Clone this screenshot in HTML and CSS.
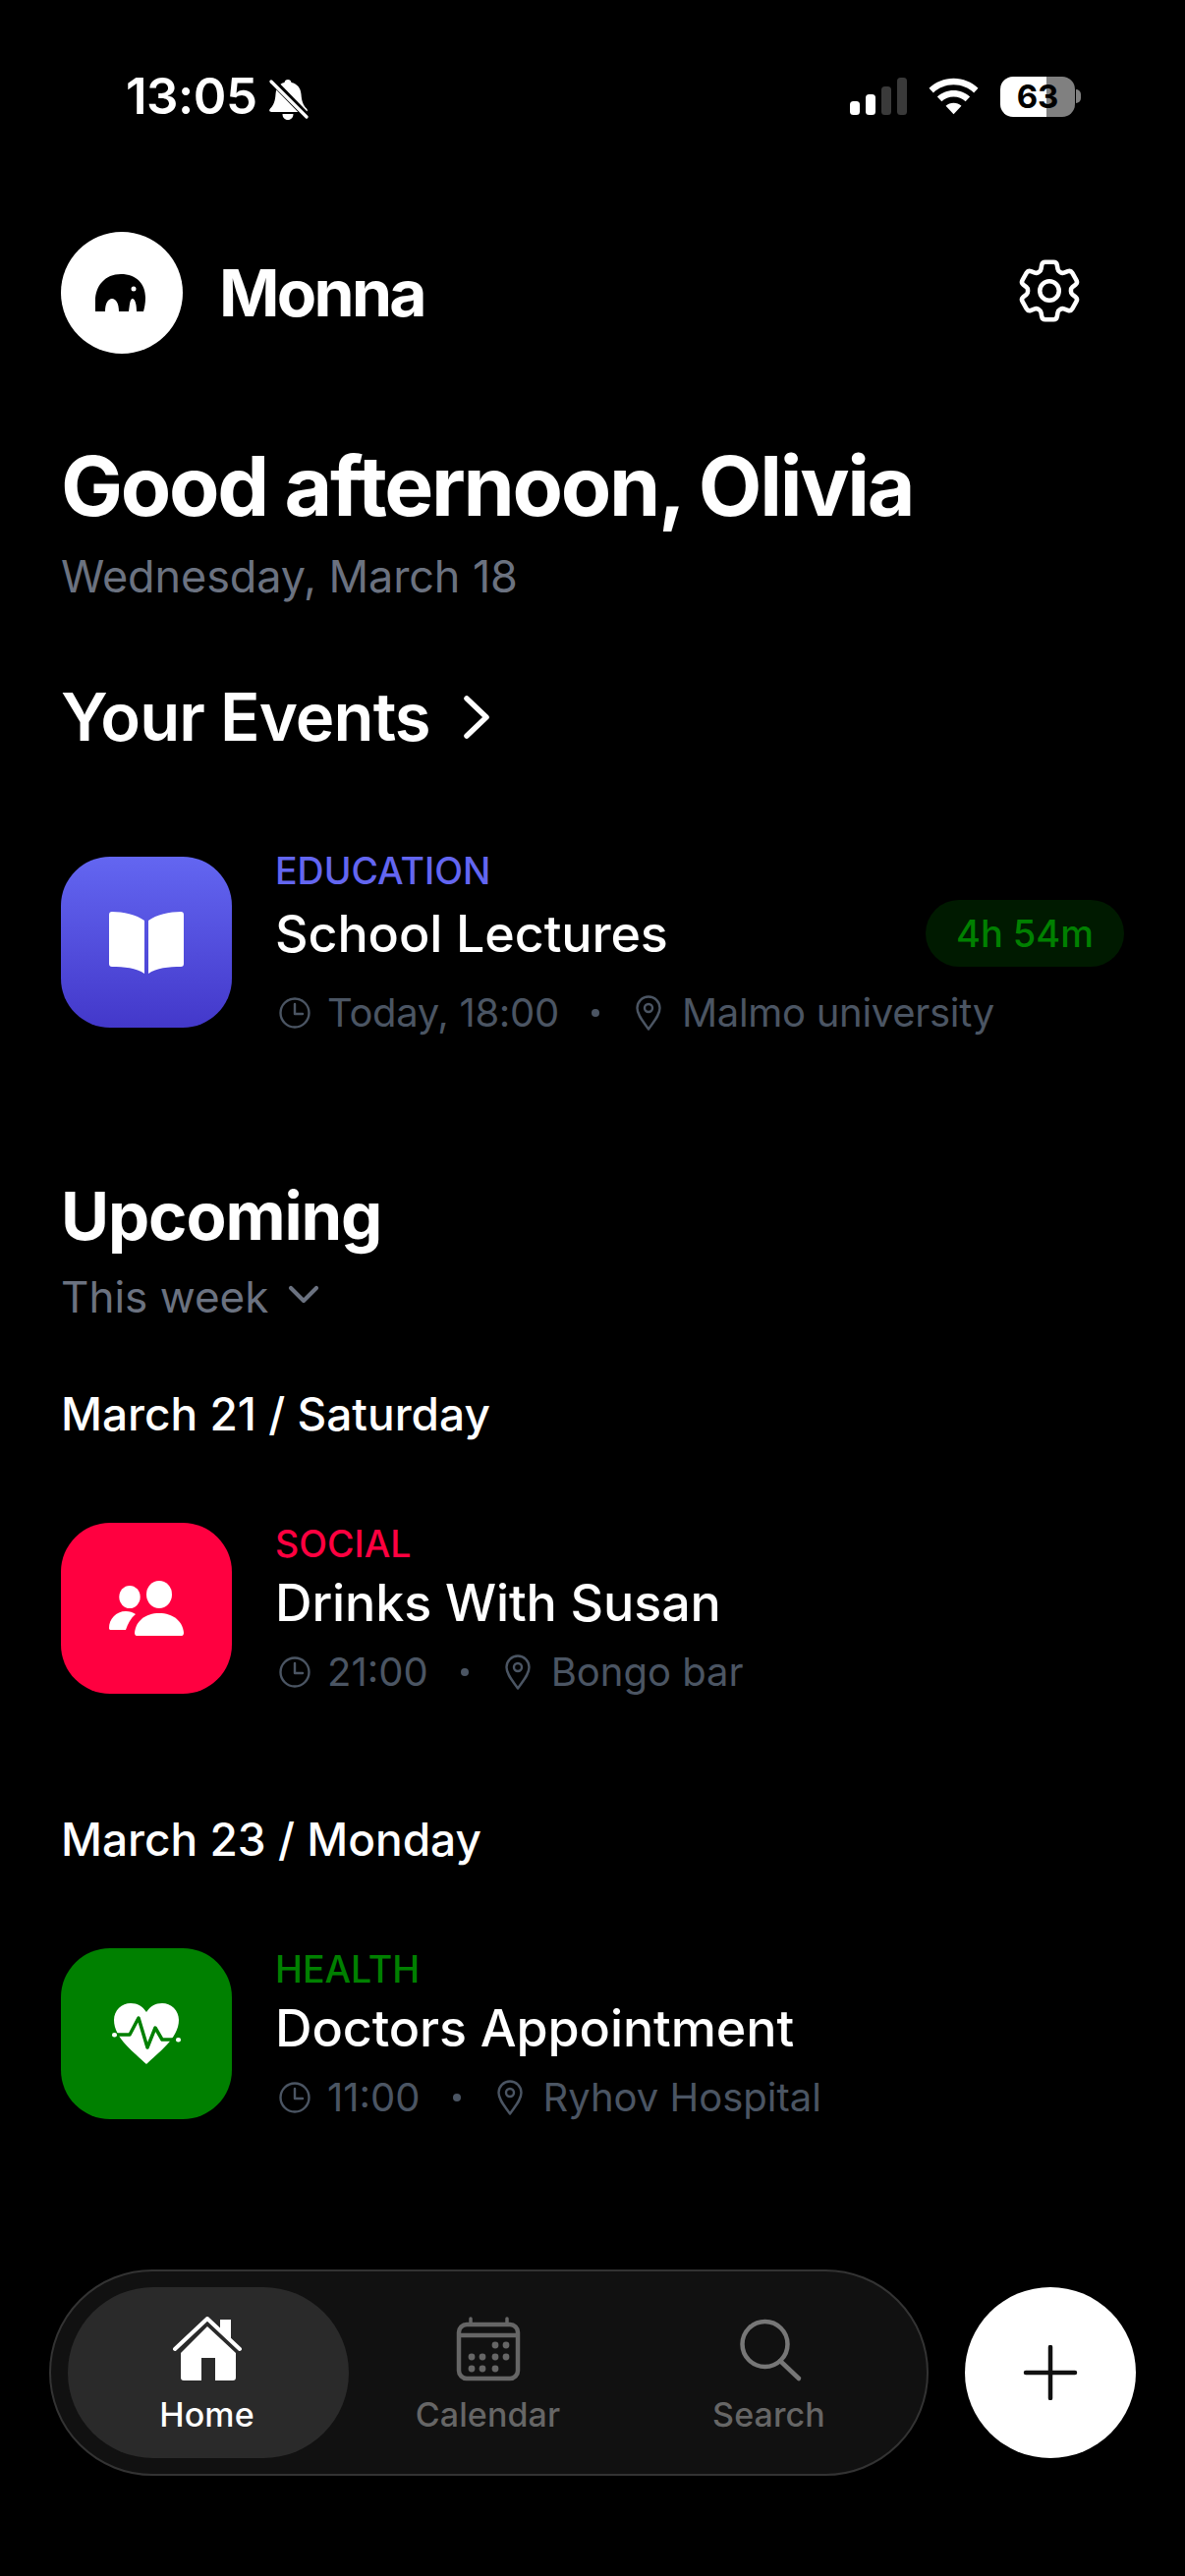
FILE: index.html
```html
<!DOCTYPE html>
<html lang="en">
<head>
<meta charset="utf-8">
<title>Monna</title>
<link rel="stylesheet" href="styles.css">
</head>
<body>
<div class="screen">
  <div class="status">
    <div class="status-left">
      <span class="time">13:05</span>
      <svg class="bell" viewBox="0 0 40 41"><path d="M19 0c2 0 3.200 1.200 3.500 3 6 1.300 9.500 5.500 10 12 .5 7 2 11 5.500 14.500 1.500 1.500 1 3.500-1.500 3.500H2.500C0 33-.5 31 1 29.500 4.500 26 6 22 6.500 15 7 8.500 10 4.300 15.500 3 15.800 1.200 17 0 19 0zM13.500 35h11c0 3.500-2.200 6-5.500 6s-5.500-2.500-5.500-6z" fill="#fff"/><path d="M0 -2l41 42" stroke="#000" stroke-width="7"/><path d="M2 2l36 36" stroke="#fff" stroke-width="3.200" stroke-linecap="round"/></svg>
    </div>
    <div class="status-right">
      <svg class="signal" viewBox="0 0 58 38"><rect x="0" y="24" width="10" height="14" rx="3.500" fill="#fff"/><rect x="16" y="17" width="10" height="21" rx="3.500" fill="#fff"/><rect x="32" y="9" width="10" height="29" rx="3.500" fill="#3a3a3a"/><rect x="48" y="0" width="10" height="38" rx="3.500" fill="#3a3a3a"/></svg>
      <svg class="wifi" viewBox="0 0 50 36"><path d="M25 0c9.500 0 18 3.700 24.500 9.800l-4.300 4.700C39.900 9.500 32.800 6.500 25 6.500S10.100 9.500 4.800 14.500L.5 9.800C7 3.700 15.500 0 25 0z" fill="#fff"/><path d="M25 12c6.300 0 12 2.400 16.300 6.400l-4.400 4.700C33.800 20.200 29.600 18.500 25 18.500s-8.800 1.700-11.900 4.600l-4.400-4.700C13 14.400 18.700 12 25 12z" fill="#fff"/><path d="M25 24.500c3 0 5.700 1.100 7.800 3L25 36l-7.800-8.500c2.100-1.900 4.800-3 7.800-3z" fill="#fff"/></svg>
      <div class="battery"><div class="battery-body"><span class="battery-num">63</span></div><span class="battery-tip"></span></div>
    </div>
  </div>

  <header class="brand">
    <div class="brand-left">
      <div class="logo">
        <svg class="logo-mark" viewBox="0 0 51 38"><path d="M0 38V27C0 12 10 0 26 0c16 0 25 10 25 24 0 6-1 10-2 14h-7c0-6-1-12-4-13-3 0-3 7-4 13H24c0-8-3-13-7-13s-7 5-7 13z" fill="#000"/><circle cx="39" cy="15" r="2.500" fill="#fff"/></svg>
      </div>
      <span class="brand-name">Monna</span>
    </div>
    <svg class="gear" viewBox="0 0 24 24" fill="none" stroke="#fff" stroke-width="1.400" stroke-linecap="round" stroke-linejoin="round"><path d="M9.594 3.940c.09-.542.56-.94 1.110-.94h2.593c.55 0 1.020.398 1.110.94l.213 1.281c.063.374.313.686.645.870.074.040.147.083.22.127.325.196.72.257 1.075.124l1.217-.456a1.125 1.125 0 0 1 1.370.490l1.296 2.247a1.125 1.125 0 0 1-.26 1.431l-1.003.827c-.293.241-.438.613-.43.992a7.723 7.723 0 0 1 0 .255c-.008.378.137.75.43.991l1.004.827c.424.35.534.955.26 1.430l-1.298 2.247a1.125 1.125 0 0 1-1.369.491l-1.217-.456c-.355-.133-.75-.072-1.076.124a6.470 6.470 0 0 1-.22.128c-.331.183-.581.495-.644.869l-.213 1.281c-.09.543-.56.94-1.110.94h-2.594c-.55 0-1.019-.398-1.110-.94l-.213-1.281c-.062-.374-.312-.686-.644-.87a6.520 6.520 0 0 1-.22-.127c-.325-.196-.72-.257-1.076-.124l-1.217.456a1.125 1.125 0 0 1-1.369-.49l-1.297-2.247a1.125 1.125 0 0 1 .26-1.431l1.004-.827c.292-.24.437-.613.43-.991a6.932 6.932 0 0 1 0-.255c.007-.38-.138-.751-.43-.992l-1.004-.827a1.125 1.125 0 0 1-.26-1.430l1.297-2.247a1.125 1.125 0 0 1 1.370-.491l1.216.456c.356.133.751.072 1.076-.124.072-.044.146-.086.22-.128.332-.183.582-.495.644-.869l.214-1.280z"/><path d="M15 12a3 3 0 1 1-6 0 3 3 0 0 1 6 0z"/></svg>
  </header>

  <section class="greeting">
    <h1 class="hello">Good afternoon, Olivia</h1>
    <p class="date">Wednesday, March 18</p>
  </section>

  <h2 class="section-title events-title">Your Events
    <svg class="chev-right" viewBox="0 0 30 46" fill="none" stroke="#fff" stroke-width="5.500" stroke-linecap="round" stroke-linejoin="round"><path d="M5 4l20 19L5 42"/></svg>
  </h2>

  <article class="event first-event">
    <div class="tile tile-edu">
      <svg class="icon-book" viewBox="0 0 76 63"><path d="M36 9C28 3 14 0 3 0 1 0 0 1 0 3v50c0 2 1 3 3 3 12 0 25 1 33 7z" fill="#fff"/><path d="M40 9c8-6 22-9 33-9 2 0 3 1 3 3v50c0 2-1 3-3 3-12 0-25 1-33 7z" fill="#fff"/></svg>
    </div>
    <div class="event-text">
      <div class="cat cat-edu">EDUCATION</div>
      <div class="event-title">School Lectures</div>
      <div class="meta">
        <svg class="clock" viewBox="0 0 32 32" fill="none" stroke="#4b5563" stroke-width="2.400" stroke-linecap="round" stroke-linejoin="round"><circle cx="16" cy="16" r="14.500"/><path d="M16 7v10h8"/></svg>
        <span class="meta-text">Today, 18:00</span>
        <span class="dot"></span>
        <svg class="pin" viewBox="0 0 26 36" fill="none" stroke="#4b5563" stroke-width="2.400" stroke-linejoin="round"><path d="M13 34.500C7 26 1.500 20 1.500 13a11.500 11.500 0 0 1 23 0c0 7-5.500 13-11.500 21.500z"/><circle cx="13" cy="13" r="4"/></svg>
        <span class="meta-text">Malmo university</span>
      </div>
    </div>
    <div class="badge">4h 54m</div>
  </article>

  <h2 class="upcoming">Upcoming</h2>
  <div class="filter">This week
    <svg class="chev-down" viewBox="0 0 32 20" fill="none" stroke="#6b7280" stroke-width="4.200" stroke-linecap="round" stroke-linejoin="round"><path d="M3 3l13 13L29 3"/></svg>
  </div>

  <h3 class="day day-first">March 21 / Saturday</h3>
  <article class="event">
    <div class="tile tile-social">
      <svg class="icon-people" viewBox="0 0 76 56"><ellipse cx="21" cy="16.500" rx="10.700" ry="11.500" fill="#fff"/><ellipse cx="51" cy="14" rx="13" ry="14" fill="#fff"/><path d="M0 48c0-9 7-17 17-17 4 0 7 1 10 3-5 4-8 10-10 16H2c-1.500 0-2-.5-2-2z" fill="#fff"/><path d="M26 53c1-12 11-20 25-20s24 8 25 20c0 2-1 3-2 3H28c-1 0-2-1-2-3z" fill="#fff"/></svg>
    </div>
    <div class="event-text">
      <div class="cat cat-social">SOCIAL</div>
      <div class="event-title">Drinks With Susan</div>
      <div class="meta">
        <svg class="clock" viewBox="0 0 32 32" fill="none" stroke="#4b5563" stroke-width="2.400" stroke-linecap="round" stroke-linejoin="round"><circle cx="16" cy="16" r="14.500"/><path d="M16 7v10h8"/></svg>
        <span class="meta-text">21:00</span>
        <span class="dot"></span>
        <svg class="pin" viewBox="0 0 26 36" fill="none" stroke="#4b5563" stroke-width="2.400" stroke-linejoin="round"><path d="M13 34.500C7 26 1.500 20 1.500 13a11.500 11.500 0 0 1 23 0c0 7-5.500 13-11.500 21.500z"/><circle cx="13" cy="13" r="4"/></svg>
        <span class="meta-text">Bongo bar</span>
      </div>
    </div>
  </article>

  <h3 class="day day-second">March 23 / Monday</h3>
  <article class="event">
    <div class="tile tile-health">
      <svg class="icon-heart" viewBox="0 0 70 62"><path d="M35 62C24 51 2 36 2 17 2 7 10 0 19 0c7 0 12 3 16 9 4-6 9-9 16-9 9 0 17 7 17 17 0 19-22 34-33 45z" fill="#fff"/><path d="M2 32h16l9-17 9 30 8-20 7 12h17" fill="none" stroke="#008000" stroke-width="3.500" stroke-linejoin="round"/><rect x="0" y="30" width="5" height="4.500" rx="2.200" fill="#fff"/><rect x="65" y="35" width="5" height="4.500" rx="2.200" fill="#fff"/></svg>
    </div>
    <div class="event-text">
      <div class="cat cat-health">HEALTH</div>
      <div class="event-title">Doctors Appointment</div>
      <div class="meta">
        <svg class="clock" viewBox="0 0 32 32" fill="none" stroke="#4b5563" stroke-width="2.400" stroke-linecap="round" stroke-linejoin="round"><circle cx="16" cy="16" r="14.500"/><path d="M16 7v10h8"/></svg>
        <span class="meta-text">11:00</span>
        <span class="dot"></span>
        <svg class="pin" viewBox="0 0 26 36" fill="none" stroke="#4b5563" stroke-width="2.400" stroke-linejoin="round"><path d="M13 34.500C7 26 1.500 20 1.500 13a11.500 11.500 0 0 1 23 0c0 7-5.500 13-11.500 21.500z"/><circle cx="13" cy="13" r="4"/></svg>
        <span class="meta-text">Ryhov Hospital</span>
      </div>
    </div>
  </article>

  <div class="bottom">
    <nav class="tabbar">
      <div class="tab tab-active">
        <svg class="tab-icon" viewBox="0 0 70 68"><path d="M2 33L35 2l33 31" fill="none" stroke="#fff" stroke-width="4" stroke-linecap="round" stroke-linejoin="round"/><path d="M48 3h11v22L48 14z" fill="#fff"/><path d="M35 10L64 37v25c0 2-1 3-3 3H43V42H29v23H11c-2 0-3-1-3-3V37z" fill="#fff"/></svg>
        <span class="tab-label">Home</span>
      </div>
      <div class="tab">
        <svg class="tab-icon" viewBox="0 0 70 68" fill="none"><rect x="5" y="8" width="60" height="55" rx="8" stroke="#666" stroke-width="4.500"/><path d="M5 19h60" stroke="#666" stroke-width="4.500"/><path d="M17 2v6M54 2v6" stroke="#666" stroke-width="3.500" stroke-linecap="round"/><g fill="#666"><circle cx="42" cy="29" r="3.400"/><circle cx="53" cy="29" r="3.400"/><circle cx="18" cy="41" r="3.400"/><circle cx="29" cy="41" r="3.400"/><circle cx="42" cy="41" r="3.400"/><circle cx="53" cy="41" r="3.400"/><circle cx="18" cy="53" r="3.400"/><circle cx="29" cy="53" r="3.400"/><circle cx="42" cy="53" r="3.400"/></g></svg>
        <span class="tab-label">Calendar</span>
      </div>
      <div class="tab">
        <svg class="tab-icon" viewBox="0 0 70 68" fill="none" stroke="#777" stroke-width="4.500" stroke-linecap="round"><circle cx="30.500" cy="28" r="23"/><path d="M46 45l19 18"/></svg>
        <span class="tab-label">Search</span>
      </div>
    </nav>
    <div class="fab">
      <svg class="plus" viewBox="0 0 56 56" fill="none" stroke="#111" stroke-width="4.500" stroke-linecap="round"><path d="M28 2v52M3 28h50"/></svg>
    </div>
  </div>
</div>
</body>
</html>
```
FILE: styles.css
```css
* { box-sizing: border-box; margin: 0; padding: 0; }
html, body { background: #000; }
body { width: 1206px; height: 2622px; overflow: hidden; font-family: Inter, "Liberation Sans", sans-serif; color: #fff; }
.screen { width: 1206px; height: 2622px; padding: 0 62px; display: flex; flex-direction: column; position: relative; }

.status { height: 236px; margin: 0 44px 0 66px; display: flex; justify-content: space-between; align-items: flex-start; padding-top: 68px; }
.status-left { display: flex; align-items: center; gap: 12px; }
.time { font-size: 51px; font-weight: 600; line-height: 60px; letter-spacing: -0.5px; }
.bell { width: 40px; height: 41px; margin-top: 6px; overflow: hidden; }
.status-right { display: flex; align-items: center; gap: 22px; height: 60px; }
.signal { width: 58px; height: 38px; }
.wifi { width: 51px; height: 38px; }
.battery { display: flex; align-items: center; gap: 1px; }
.battery-body { width: 76px; height: 41px; border-radius: 13px; background: linear-gradient(90deg, #fff 62%, #808080 62%); display: flex; align-items: center; justify-content: center; }
.battery-num { color: #000; font-size: 33px; font-weight: 700; line-height: 41px; }
.battery-tip { width: 5px; height: 14px; background: #808080; border-radius: 0 5px 5px 0; }

.brand { height: 124px; display: flex; align-items: center; justify-content: space-between; padding-right: 37px; }
.brand-left { display: flex; align-items: center; gap: 37px; }
.logo { width: 124px; height: 124px; border-radius: 50%; background: #fff; display: flex; align-items: center; justify-content: center; }
.logo-mark { width: 51px; height: 38px; margin-right: 3px; }
.brand-name { font-size: 66px; font-weight: 700; letter-spacing: -2.700px; line-height: 80px; }
.gear { width: 78px; height: 78px; margin-top: -4px; }

.greeting { margin-top: 85px; }
.hello { font-size: 84px; font-weight: 700; letter-spacing: -2.300px; line-height: 100px; }
.date { font-size: 45px; color: #6b7280; line-height: 56px; margin-top: 14px; font-weight: 400; letter-spacing: -0.1px; }

.section-title { font-size: 67px; font-weight: 600; letter-spacing: -0.9px; line-height: 76px; display: flex; align-items: center; gap: 32px; }
.events-title { margin-top: 77px; }
.chev-right { width: 30px; height: 46px; }

.event { height: 174px; display: flex; align-items: flex-start; gap: 44px; }
.first-event { margin-top: 104px; }
.tile { width: 174px; height: 174px; flex: none; border-radius: 50px; display: flex; align-items: center; justify-content: center; }
.tile-edu { background: linear-gradient(180deg, #6366f1, #4338ca); }
.tile-social { background: #ff0040; }
.tile-health { background: #008000; }
.icon-book { width: 76px; height: 63px; }
.icon-people { width: 76px; height: 56px; }
.icon-heart { width: 70px; height: 62px; }
.event-text { flex: 1; min-width: 0; display: flex; flex-direction: column; white-space: nowrap; }
.first-event .event-text { margin-top: -7px; }
.cat { font-size: 37.500px; font-weight: 500; line-height: 44px; }
.cat-edu { color: #6366f1; }
.cat-social { color: #ff0040; }
.cat-health { color: #008000; }
.event-title { font-size: 52px; font-weight: 500; line-height: 62px; margin-top: 7px; letter-spacing: -0.1px; }
.first-event .event-title { margin-top: 11px; }
.meta { display: flex; align-items: center; margin-top: 14px; height: 50px; color: #4b5563; }
.first-event .meta { margin-top: 24px; }
.first-event .meta-text { letter-spacing: -0.3px; }
.meta-text { font-size: 40px; line-height: 50px; }
.clock { width: 32px; height: 32px; flex: none; margin: 0 17px 0 4px; }
.pin { width: 26px; height: 36px; flex: none; margin-right: 21px; }
.dot { width: 8px; height: 8px; border-radius: 50%; background: #4b5563; margin: 0 37px 0 33px; flex: none; }
.badge { width: 202px; height: 68px; border-radius: 34px; background: #001a00; color: #008000; font-size: 38px; font-weight: 500; line-height: 68px; text-align: center; margin-top: 44px; flex: none; }

.upcoming { font-size: 67px; font-weight: 700; letter-spacing: -1.100px; line-height: 80px; margin-top: 152px; }
.filter { display: flex; align-items: center; gap: 20px; font-size: 44px; line-height: 56px; color: #6b7280; margin-top: 14px; }
.chev-down { width: 32px; height: 20px; margin-bottom: 4px; }
.day { font-size: 46px; font-weight: 500; line-height: 56px; }
.day-first { margin-top: 63px; }
.day-second { margin-top: 120px; }
.day + .event { margin-top: 83px; }

.bottom { position: absolute; left: 50px; right: 50px; top: 2310px; display: flex; align-items: center; justify-content: space-between; }
.tabbar { width: 895px; height: 210px; border-radius: 105px; background: #111; border: 2px solid #333; padding: 0 17px; display: flex; align-items: center; }
.tab { flex: 0 0 286px; height: 174px; display: flex; flex-direction: column; align-items: center; justify-content: flex-start; padding: 30px 3px 0 0; border-radius: 87px; color: #666; }
.tab-active { background: #2a2a2a; color: #fff; }
.tab-icon { width: 70px; height: 68px; }
.tab-label { font-size: 34px; font-weight: 500; line-height: 40px; margin-top: 12px; letter-spacing: 0.1px; }
.fab { width: 174px; height: 174px; border-radius: 50%; background: #fff; display: flex; align-items: center; justify-content: center; }
.plus { width: 56px; height: 56px; }
```
